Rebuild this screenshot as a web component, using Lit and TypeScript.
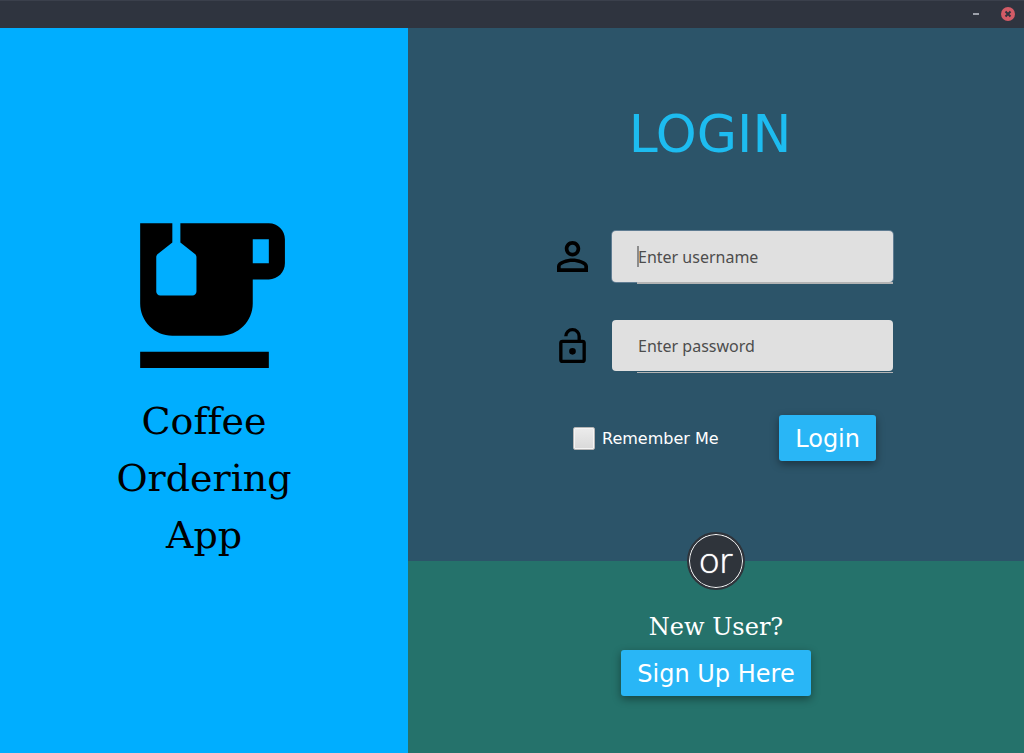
import { LitElement, html, css } from "lit";
import { customElement, state } from "lit/decorators.js";

@customElement("app-root")
export class AppRoot extends LitElement {
  static styles = css`
    :host {
      display: flex;
      flex-direction: column;
      min-height: 100vh;
      font-family: "DejaVu Sans", sans-serif;
      font-size: 16px;
    }
    *,
    *::before,
    *::after {
      box-sizing: border-box;
    }
    .titlebar {
      display: flex;
      align-items: center;
      justify-content: flex-end;
      gap: 20px;
      height: 28px;
      padding-right: 8px;
      background: #2f343f;
      box-shadow: inset 0 1px #3b404c;
    }
    .window-button {
      display: flex;
      padding: 0;
      border: 0;
      background: none;
    }
    .content {
      flex: 1;
      display: grid;
      grid-template-columns: 51fr 77fr;
    }
    .brand {
      display: flex;
      flex-direction: column;
      align-items: center;
      justify-content: center;
      gap: 1px;
      background: #00aeff;
      color: #000;
    }
    .brand-name {
      margin: 0;
      padding-bottom: 19px;
      font: 38px/57px "DejaVu Serif", serif;
      font-variant-ligatures: none;
      text-align: center;
    }
    .line {
      display: block;
    }
    .panes {
      display: grid;
      grid-template-rows: 1fr 192px;
    }
    .login {
      display: flex;
      flex-direction: column;
      align-items: center;
      padding-top: 74px;
      background: #2c5469;
    }
    .title {
      margin: 0;
      padding-right: 12px;
      font-size: 52px;
      font-weight: 400;
      line-height: 64px;
      color: #1dbcf0;
    }
    .form {
      display: flex;
      flex-direction: column;
      width: 354px;
      padding: 65px 0 0 18px;
    }
    .field {
      display: grid;
      grid-template-columns: 31px 1fr;
      align-items: center;
      gap: 24px;
      margin-bottom: 36px;
    }
    .field-icon {
      display: flex;
      justify-content: center;
      padding-bottom: 2px;
    }
    .box {
      position: relative;
      display: flex;
      flex-direction: column;
      align-items: flex-end;
      gap: 1px;
    }
    .box::after {
      content: "";
      width: calc(100% - 25px);
      border-bottom: 1px solid #b4b4b4;
    }
    .box.active {
      gap: 0;
    }
    .box.active::after {
      z-index: 1;
      border-bottom-width: 2px;
    }
    .box.active::before {
      content: "";
      position: absolute;
      top: 15px;
      left: 25px;
      width: 2px;
      height: 21px;
      background: #8c8c8c;
    }
    .input {
      width: 100%;
      height: 51px;
      padding: 0 26px;
      border: 0;
      border-radius: 4px;
      outline: none;
      background: #e0e0e0;
      color: #333;
      caret-color: transparent;
      font: 16px "Noto Sans", sans-serif;
    }
    .input:not(:placeholder-shown) {
      caret-color: #808080;
    }
    .input::placeholder {
      color: #4d4d4d;
      opacity: 1;
    }
    .active .input {
      box-shadow: 0 0 0 1px #5f7c92;
    }
    .actions {
      display: flex;
      align-items: center;
      justify-content: space-between;
      padding: 6px 17px 0 16px;
    }
    .remember {
      display: flex;
      align-items: center;
      gap: 7px;
      color: #fff;
    }
    .check {
      appearance: none;
      width: 22px;
      height: 23px;
      margin: 0;
      border: 1px solid #b5b5b5;
      border-radius: 2px;
      background: linear-gradient(#ececec, #d9d9d9);
      box-shadow: inset 0 0 0 1px #f4f4f4;
    }
    .check:checked {
      background: #29b6f6;
    }
    .button {
      height: 46px;
      padding: 2px 16px 0;
      border: 0;
      border-radius: 3px;
      background: #29b6f6;
      box-shadow: 0 3px 8px rgba(0, 0, 0, 0.4);
      color: #fff;
      font: 24px "DejaVu Sans", sans-serif;
    }
    .signup {
      position: relative;
      display: flex;
      flex-direction: column;
      align-items: center;
      gap: 7px;
      padding-top: 50px;
      background: #25726b;
    }
    .or {
      position: absolute;
      top: 0;
      left: 50%;
      display: flex;
      align-items: center;
      justify-content: center;
      width: 58px;
      height: 58px;
      padding-bottom: 2px;
      transform: translate(-50%, -50%);
      border: 2px solid #2f343b;
      border-radius: 50%;
      background: #2f343b;
      box-shadow: inset 0 0 0 1px #fff;
      color: #fff;
      font: 300 35px/48px "Open Sans", sans-serif;
      text-shadow: 0 0 1px #fff;
    }
    .new-user {
      margin: 0;
      color: #fff;
      font: 24px/32px "DejaVu Serif", serif;
    }
  `;

  @state() private remember = false;
  @state() private username = "";

  render() {
    return html`
      <header class="titlebar">
        <button class="window-button" aria-label="Minimize">
          <svg width="8" height="14" viewBox="0 0 8 14">
            <path d="M1 6h6v2H1z" fill="#9da1ab" />
          </svg>
        </button>
        <button class="window-button" aria-label="Close">
          <svg width="16" height="16" viewBox="0 0 16 16">
            <circle cx="8" cy="8" r="7" fill="#d35b66" />
            <path d="M5.5 5.5l5 5m0-5l-5 5" stroke="#2f343f" stroke-width="2" />
          </svg>
        </button>
      </header>
      <main class="content">
        <section class="brand">
          <svg width="193" height="193" viewBox="0 0 24 24" aria-hidden="true">
            <path
              d="M20 3H9v2.4l1.81 1.45c.12.09.19.24.19.39v4.26c0 .28-.22.5-.5.5h-4c-.28 0-.5-.22-.5-.5V7.24c0-.15.07-.3.19-.39L8 5.4V3H4v10c0 2.21 1.79 4 4 4h6c2.21 0 4-1.79 4-4v-3h2c1.11 0 2-.89 2-2V5c0-1.11-.89-2-2-2zm0 5h-2V5h2v3zM4 19h16v2H4z"
            />
          </svg>
          <h1 class="brand-name">
            <span class="line">Coffee</span>
            <span class="line">Ordering</span>
            <span class="line">App</span>
          </h1>
        </section>
        <div class="panes">
          <section class="login">
            <h2 class="title">LOGIN</h2>
            <form class="form" @submit=${(e: Event) => e.preventDefault()}>
              <div class="field">
                <label class="field-icon" for="username" aria-label="Username">
                  <svg width="31" height="31" viewBox="4 4 16 16">
                    <path
                      d="M12 5.9c1.16 0 2.1.94 2.1 2.1s-.94 2.1-2.1 2.1S9.9 9.16 9.9 8s.94-2.1 2.1-2.1m0 9c2.97 0 6.1 1.46 6.1 2.1v1.1H5.9V17c0-.64 3.13-2.1 6.1-2.1M12 4C9.79 4 8 5.79 8 8s1.79 4 4 4 4-1.79 4-4-1.79-4-4-4zm0 9c-2.67 0-8 1.34-8 4v3h16v-3c0-2.66-5.33-4-8-4z"
                    />
                  </svg>
                </label>
                <div class="box ${this.username ? "" : "active"}">
                  <input
                    class="input"
                    id="username"
                    type="text"
                    placeholder="Enter username"
                    @input=${(e: Event) => (this.username = (e.target as HTMLInputElement).value)}
                  />
                </div>
              </div>
              <div class="field">
                <label class="field-icon" for="password" aria-label="Password">
                  <svg width="27" height="35" viewBox="4 1 16 21">
                    <path
                      d="M18 20V10H6v10h12m0-12a2 2 0 0 1 2 2v10a2 2 0 0 1-2 2H6a2 2 0 0 1-2-2V10a2 2 0 0 1 2-2h9V6a3 3 0 0 0-6 0H7a5 5 0 0 1 10 0v2h1m-6 9a2 2 0 1 1 0-4 2 2 0 0 1 0 4z"
                    />
                  </svg>
                </label>
                <div class="box">
                  <input class="input" id="password" type="password" placeholder="Enter password" />
                </div>
              </div>
              <div class="actions">
                <label class="remember">
                  <input
                    class="check"
                    type="checkbox"
                    .checked=${this.remember}
                    @change=${(e: Event) => (this.remember = (e.target as HTMLInputElement).checked)}
                  />
                  Remember Me
                </label>
                <button class="button" type="submit">Login</button>
              </div>
            </form>
          </section>
          <section class="signup">
            <span class="or">or</span>
            <p class="new-user">New User?</p>
            <button class="button" type="button">Sign Up Here</button>
          </section>
        </div>
      </main>
    `;
  }
}
